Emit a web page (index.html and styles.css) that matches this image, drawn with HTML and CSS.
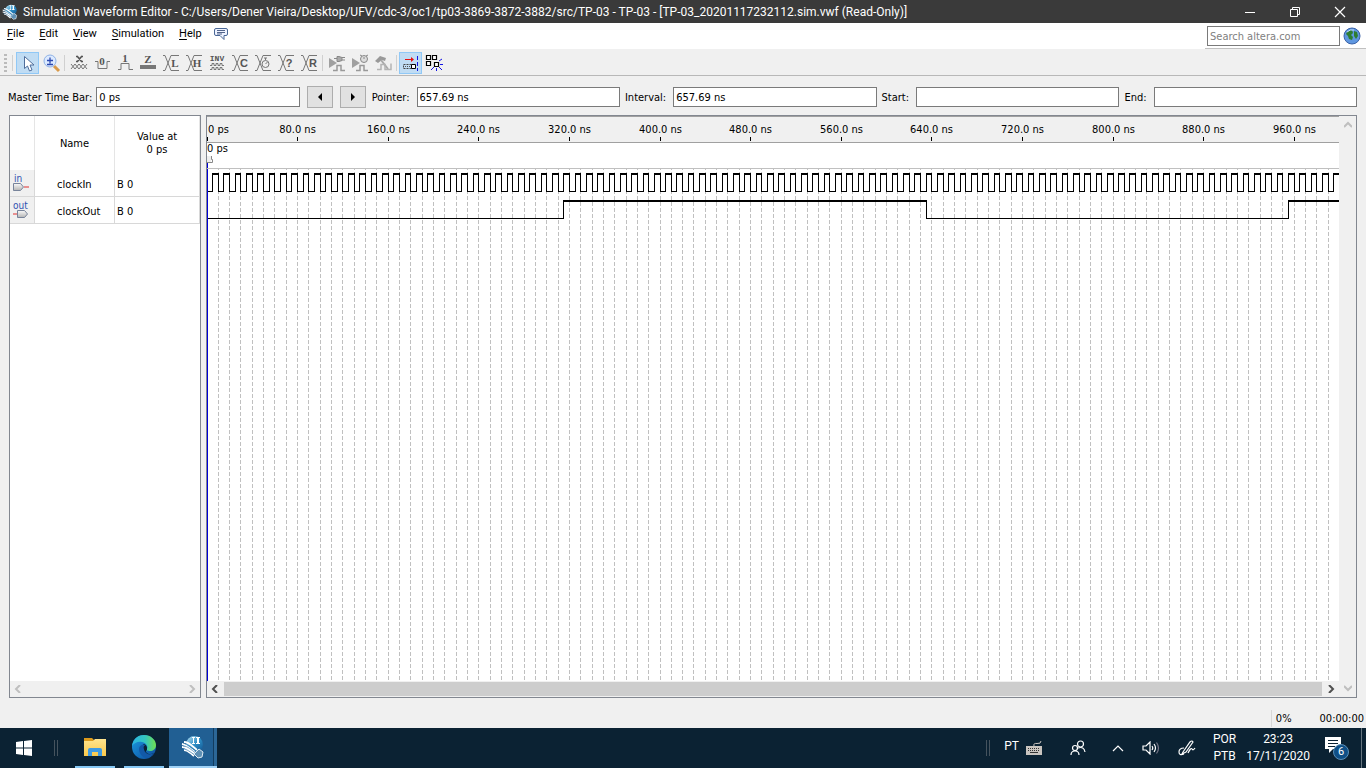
FILE: index.html
```html
<!DOCTYPE html>
<html lang="en">
<head>
<meta charset="utf-8">
<title>Simulation Waveform Editor</title>
<link rel="stylesheet" href="styles.css">
</head>
<body>
<svg class="defs" width="0" height="0" aria-hidden="true">
  <defs>
    <linearGradient id="gBlue" x1="0" y1="0" x2="1" y2="1"><stop offset="0" stop-color="#bfe6f5"/><stop offset=".5" stop-color="#2f8fc6"/><stop offset="1" stop-color="#0c4f8c"/></linearGradient>
    <linearGradient id="gPin" x1="0" y1="0" x2="0" y2="1"><stop offset="0" stop-color="#fafafa"/><stop offset="1" stop-color="#b4b4b4"/></linearGradient>
    <linearGradient id="gEdge" x1="0" y1="0" x2="1" y2="0"><stop offset="0" stop-color="#2bb5e4"/><stop offset=".55" stop-color="#34c6c0"/><stop offset="1" stop-color="#6fe04f"/></linearGradient>
    <linearGradient id="gEdge2" x1="0" y1="0" x2="1" y2="1"><stop offset="0" stop-color="#1b9de2"/><stop offset="1" stop-color="#0d4a9c"/></linearGradient>
    <linearGradient id="gFolder" x1="0" y1="0" x2="0" y2="1"><stop offset="0" stop-color="#ffe58f"/><stop offset="1" stop-color="#fbc94a"/></linearGradient>
    <symbol id="app" viewBox="0 0 24 24">
      <circle cx="13.5" cy="9.5" r="8.5" fill="url(#gBlue)"/>
      <path d="M11 2h3v1h-1v5h1v1h-3V8h1V3h-1zM15 2h4v1h-1v5h1v1h-4V8h1V3h-1z" fill="#fff"/>
      <path d="M1 9c5 1 8 5 13 8M1 12c5 0 8 4 13 7M3 15c4 0 6 3 10 6M3 7c5 0 8 4 13 8" fill="none" stroke="#fff" stroke-width="1.8"/>
      <path d="M2 11c5 0 8 4 13 7M2 14c4 0 7 3 12 6M2 8c5 1 8 5 13 8" fill="none" stroke="#3a7eb0" stroke-width=".7"/>
      <path d="M13 19l5-5 4 3-1 5-4 1z" fill="#5d8fb4" stroke="#dfeaf2" stroke-width="1"/>
    </symbol>
    <symbol id="xcell" viewBox="0 0 18 18"><path d="M1 1.500h2l6 15h8M1 16.500h2l6-15h8" fill="none" stroke="#777"/></symbol>
    <symbol id="play" viewBox="0 0 18 18"><path d="M1 4l8 5-8 5z" fill="#a0a0a0"/><path d="M5 16.500h4v-5h4v5h4" fill="none" stroke="#999" stroke-width="1.500"/></symbol>
  </defs>
</svg>

<header class="titlebar">
  <svg class="app-icon" viewBox="0 0 24 24"><use href="#app"/></svg>
  <h1 class="title">Simulation Waveform Editor - C:/Users/Dener Vieira/Desktop/UFV/cdc-3/oc1/tp03-3869-3872-3882/src/TP-03 - TP-03 - [TP-03_20201117232112.sim.vwf (Read-Only)]</h1>
  <div class="window-buttons">
    <button class="win-btn" aria-label="Minimize"><svg width="12" height="12"><path d="M1 6.500h10" stroke="#fff"/></svg></button>
    <button class="win-btn" aria-label="Restore"><svg width="12" height="12" fill="none" stroke="#fff"><path d="M1.500 3.500h7v7h-7zM3.500 3.500v-2h7v7h-2"/></svg></button>
    <button class="win-btn" aria-label="Close"><svg width="12" height="12"><path d="M1 1l10 10M11 1L1 11" stroke="#fff" stroke-width="1.200"/></svg></button>
  </div>
</header>

<nav class="menubar">
  <button class="menu"><u>F</u>ile</button>
  <button class="menu"><u>E</u>dit</button>
  <button class="menu"><u>V</u>iew</button>
  <button class="menu"><u>S</u>imulation</button>
  <button class="menu"><u>H</u>elp</button>
  <button class="menu feedback" aria-label="Feedback"><svg width="16" height="14"><path d="M3 1.500h10q1.500 0 1.500 1.500v4q0 1.500-1.500 1.500h-2v4l-4-4H3Q1.500 8.500 1.500 7V3Q1.500 1.500 3 1.500z" fill="#eef3ff" stroke="#4a6796"/><path d="M4 3.500h8M4 5.500h8M4 7h5" stroke="#53658c"/></svg></button>
  <form class="search">
    <input class="search-box" type="text" placeholder="Search altera.com" aria-label="Search altera.com">
    <button class="globe" type="button" aria-label="Search"><svg width="18" height="18"><circle cx="9" cy="9" r="8" fill="#5f97e0" stroke="#3b62a8"/><path d="M3 7c1-3 4-4 6-4l1 3-2 2 2 2-1 3-3-1-1-3zM11 4l3 1 1 4-2 3-2-3z" fill="#2e7d32"/><path d="M4 5q3-3 7-2" stroke="#c9e0ff" fill="none"/></svg></button>
  </form>
</nav>

<div class="toolbar" role="toolbar" aria-label="Waveform tools">
  <span class="grip"></span><span class="sep"></span>
  <button class="tool active" aria-label="Selection tool"><svg width="18" height="18"><path d="M5.500 2.500v12l3-2.500 2 5 2.500-1-2-5h4z" fill="#fff" stroke="#4f6d9a"/></svg></button>
  <button class="tool" aria-label="Zoom tool"><svg width="18" height="18"><path d="M12 12l5 5" stroke="#d99a4a" stroke-width="3"/><circle cx="8" cy="7" r="6" fill="#dceaff" stroke="#8fb2e6"/><path d="M5 6.500h6M8 3.500v6M5 10.500h6" stroke="#2c49b0" stroke-width="1.300"/></svg></button>
  <span class="sep"></span>
  <button class="tool" aria-label="Forcing unknown"><svg width="18" height="18"><path d="M6 2.500h2M11 2.500h2M7 2l5 6M12 2L7 8M6 7.500h2M11 7.500h2" stroke="#555" stroke-width="1.600"/><path d="M1 10l4 5 4-5 4 5 4-5M1 15l4-5 4 5 4-5 4 5" fill="none" stroke="#777"/></svg></button>
  <button class="tool" aria-label="Forcing low"><svg width="18" height="18"><path d="M2 7.500h3v7h9v-7h3" fill="none" stroke="#777"/><text class="tl serif" x="9" y="11">0</text></svg></button>
  <button class="tool" aria-label="Forcing high"><svg width="18" height="18"><path d="M2 15.500h3v-6h8v6h4" fill="none" stroke="#777"/><text class="tl serif" x="9" y="8">1</text></svg></button>
  <button class="tool" aria-label="High impedance"><svg width="18" height="18"><path d="M1 11h16v4H1z" fill="#777"/><text class="tl serif" x="9" y="9">Z</text></svg></button>
  <button class="tool" aria-label="Weak low"><svg width="18" height="18"><use href="#xcell"/><text class="tl serif" x="13" y="13">L</text></svg></button>
  <button class="tool" aria-label="Weak high"><svg width="18" height="18"><use href="#xcell"/><text class="tl serif" x="12" y="13">H</text></svg></button>
  <button class="tool" aria-label="Invert"><svg width="18" height="18"><text class="tl small" x="9" y="7">INV</text><path d="M2 11.500h2v-2h2v2h2v-2h2v2h2v-2h2v2h2M2 15.500h2v-2h2v2h2v-2h2v2h2v-2h2v2h2" fill="none" stroke="#777"/></svg></button>
  <button class="tool" aria-label="Count value"><svg width="18" height="18"><use href="#xcell"/><text class="tl" x="13" y="13">C</text></svg></button>
  <button class="tool" aria-label="Overwrite clock"><svg width="18" height="18"><use href="#xcell"/><circle cx="11.500" cy="10" r="3.500" fill="#f0f0f0" stroke="#777"/><path d="M11.500 10l2-2M11.500 4v2M10 4h3" stroke="#777"/></svg></button>
  <button class="tool" aria-label="Arbitrary value"><svg width="18" height="18"><use href="#xcell"/><text class="tl" x="12" y="13">?</text></svg></button>
  <button class="tool" aria-label="Random values"><svg width="18" height="18"><use href="#xcell"/><text class="tl" x="13" y="13">R</text></svg></button>
  <span class="sep"></span>
  <button class="tool" aria-label="Run functional simulation"><svg width="18" height="18"><use href="#play"/><path d="M6 4.500h3M9 2.500h2l3 1v3l-3 1H9zM14 3.500h3M14 6h3" fill="#aaa" stroke="#888"/></svg></button>
  <button class="tool" aria-label="Run timing simulation"><svg width="18" height="18"><use href="#play"/><circle cx="13" cy="5" r="3.500" fill="#ddd" stroke="#888"/><path d="M13 3v2M9 1l2 1M17 1l-2 1" stroke="#888"/></svg></button>
  <button class="tool" aria-label="Generate testbench"><svg width="18" height="18"><path d="M1 7l5-5 6 2-1 3-3-1-4 3z" fill="#999"/><path d="M7 6l7 9" stroke="#aaa" stroke-width="2"/><path d="M3 15.500h4v-5h4v5h6v-6" fill="none" stroke="#b4b4b4" stroke-width="1.500"/></svg></button>
  <span class="sep"></span>
  <button class="tool active" aria-label="Snap to transition"><svg width="18" height="18"><path d="M3 5.500h8" stroke="#e81010"/><path d="M9 3l3 2.500L9 8z" fill="#e81010"/><path d="M1.500 10.500h8v4h-8z" fill="none" stroke="#444" stroke-dasharray="2 1"/><path d="M3 12.500h6" stroke="#555" stroke-dasharray="1 1"/><path d="M9.500 10.500h4v4h-4z" fill="#fff" stroke="#000"/><path d="M15.500 2v15" stroke="#1414e6" stroke-dasharray="4 2"/></svg></button>
  <button class="tool" aria-label="Snap to grid"><svg width="18" height="18"><path d="M1.500 1.500h4v4h-4zM7.500 1.500h4v4h-4zM1.500 7.500h4v4h-4zM9.500 8.500h4v4h-4z" fill="#fff" stroke="#000" stroke-width="1.200"/><path d="M14 7l3-2M15 10.500h3M14 13l3 3M11.500 14v3M9 13l-3 3" stroke="#1414e6"/></svg></button>
</div>

<main class="workspace">
  <form class="timebar">
    <label for="master">Master Time Bar:</label><input class="field" id="master" type="text" value="0 ps">
    <button class="step" type="button" aria-label="Previous transition"><svg width="6" height="8"><path d="M5 0v8L1 4z"/></svg></button>
    <button class="step" type="button" aria-label="Next transition"><svg width="6" height="8"><path d="M1 0v8l4-4z"/></svg></button>
    <label for="pointer">Pointer:</label><input class="field" id="pointer" type="text" value="657.69 ns">
    <label for="interval">Interval:</label><input class="field" id="interval" type="text" value="657.69 ns">
    <label for="start">Start:</label><input class="field" id="start" type="text">
    <label for="end">End:</label><input class="field" id="end" type="text">
  </form>

  <div class="panels">
    <section class="panel signals">
      <table class="signal-table">
        <colgroup><col class="col-icon"><col class="col-name"><col></colgroup>
        <thead><tr><th></th><th>Name</th><th>Value at<br>0 ps</th></tr></thead>
        <tbody>
          <tr><td class="pin"><svg width="20" height="20"><text class="pin-text" x="2" y="8">in</text><path d="M1.500 9.500h7l3 3.500-3 3.500h-7z" fill="url(#gPin)" stroke="#77839a"/><path d="M12 13h5" stroke="#e03030"/></svg></td><td class="name">clockIn</td><td>B 0</td></tr>
          <tr><td class="pin"><svg width="20" height="20"><text class="pin-text" x="1" y="8">out</text><path d="M5.500 9.500h7l3 3.500-3 3.500h-7z" fill="url(#gPin)" stroke="#77839a"/><path d="M1 13h4" stroke="#e03030"/></svg></td><td class="name">clockOut</td><td>B 0</td></tr>
        </tbody>
      </table>
      <div class="hscroll disabled"><svg width="8" height="8"><path d="M6 0L2 4l4 4"/></svg><svg width="8" height="8"><path d="M2 0l4 4-4 4"/></svg></div>
    </section>

    <section class="panel waves">
      <div class="wave-view">
        <svg class="axis" id="axis"></svg>
        <div class="cursor-row"><span>0 ps</span><svg width="6" height="12"><path d="M0 0h4v6H0z" fill="#eee"/><path d="M4.500 0v3.500h1v3H0" fill="none" stroke="#888"/><path class="bar" d="M.5 7v5"/></svg></div>
        <svg class="plot" id="plot"></svg>
      </div>
      <div class="vscroll"><svg width="8" height="8"><path d="M0 6l4-4 4 4"/></svg><svg width="8" height="8"><path d="M0 2l4 4 4-4"/></svg></div>
      <div class="hscroll"><svg width="8" height="8"><path d="M6 0L2 4l4 4"/></svg><span class="thumb"></span><svg width="8" height="8"><path d="M2 0l4 4-4 4"/></svg></div>
    </section>
  </div>
</main>

<footer class="statusbar"><span class="progress">0%</span><span>00:00:00</span></footer>

<div class="taskbar">
  <button class="task start" aria-label="Start"><svg width="16" height="16" fill="#fff"><path d="M0 2l7-1v6.500H0zM8 1l8-1v7.500H8zM0 8.500h7V15l-7-1zM8 8.500h8V16l-8-1z"/></svg></button>
  <span class="task-grip"></span>
  <button class="task running" aria-label="File Explorer"><svg width="22" height="18"><path d="M0 0h8l2 2h11v4H0z" fill="#dc9a1c"/><path d="M0 3h9l2-2h11v17H0z" fill="url(#gFolder)"/><path d="M4 18v-6q0-2 2-2h10q2 0 2 2v6h-4v-4H8v4z" fill="#3f9be3"/></svg></button>
  <button class="task running" aria-label="Microsoft Edge"><svg width="24" height="24"><circle cx="12" cy="12" r="12" fill="url(#gEdge2)"/><path d="M0 11C1 3 7 0 12 0c7 0 12 5 12 10 0 4-3 6-6 6-2 0-4-1-3-2 1-2 0-6-5-7C6 6 2 8 0 11z" fill="url(#gEdge)"/><path d="M12 9c-4 2-5 9 1 12 4 1 7 0 9-3-3 2-7 1-8-1-1-1 1-2 1-3 0-3-1-4-3-5z" fill="#0b2233"/><path d="M7 14c0 4 3 8 7 9 3 0 6-2 8-5-3 2-9 2-10-4 0-2 0-3 1-4-3-1-6 1-6 4z" fill="#1259a8"/><path d="M12 11c-1 2 0 4 2 5l1-2c0-2-1-3-3-3z" fill="#0b2233"/></svg></button>
  <button class="task current" aria-label="Simulation Waveform Editor"><svg width="24" height="24"><use href="#app"/></svg></button>
  <div class="tray">
    <span class="task-grip"></span>
    <span class="lang">PT</span>
    <svg class="kbd" width="16" height="14"><path d="M0 5h16v9H0z" fill="#c9c4bf"/><path d="M2 7.500h12M2 9.500h12" stroke="#333" stroke-dasharray="1 1"/><path d="M4 11.500h8" stroke="#333"/><path d="M8 5q-1-3 3-2.500T15 0" stroke="#c9c4bf" fill="none"/></svg>
    <svg class="people" width="16" height="16" fill="none" stroke="#fff" stroke-width="1.200"><circle cx="10.500" cy="4" r="3"/><circle cx="5" cy="8" r="2.500"/><path d="M1 15q0-4 4-4t4 4M8 8q6-2 7 4"/></svg>
    <svg class="up" width="12" height="8" fill="none" stroke="#fff" stroke-width="1.200"><path d="M1 7l5-5 5 5"/></svg>
    <svg class="vol" width="18" height="14" fill="none" stroke="#fff" stroke-width="1.200"><path d="M1 5h3l4-4v12L4 9H1zM10 5q1.500 2 0 4M12 3q3 4 0 8"/><path d="M14.500 1.500q4 5.500 0 11" stroke="#778"/></svg>
    <svg class="pen" width="18" height="16" fill="none" stroke="#fff" stroke-width="1.200"><path d="M5 12l7-10q2-2 3 0L8 12l-4 2zM6 8q-5 0-5 4t5 2M10 13q3-6 4-4t3-1"/></svg>
    <span class="stack">POR<br>PTB</span>
    <span class="stack clock">23:23<br>17/11/2020</span>
    <button class="notify" aria-label="6 new notifications"><svg width="24" height="26"><path d="M0 2h16v12H8l-4 4v-4H0z" fill="#fff"/><path d="M3 5.500h10M3 8.500h10M3 11.500h7" stroke="#0b2233"/></svg><span class="badge">6</span></button>
    <span class="peek"></span>
  </div>
</div>
<script src="wave.js"></script>
</body>
</html>
```
FILE: styles.css
```css
* { box-sizing: border-box; }
body {
  margin: 0;
  min-height: 100vh;
  display: flex;
  flex-direction: column;
  background: #f0f0f0;
  color: #000;
  font: 11px/13px "DejaVu Sans Condensed", "Noto Sans", sans-serif;
}
button { border: 0; padding: 0; background: none; font: inherit; color: inherit; }
svg { display: block; flex: none; }
.defs { position: absolute; }

.titlebar { display: flex; align-items: center; height: 23px; padding: 0 4px 0 2px; background: #3a3a3a; color: #fff; }
.app-icon { width: 16px; height: 16px; }
.title { flex: 1; margin: 0 0 0 5px; font: 12px/16px Roboto, sans-serif; white-space: nowrap; overflow: hidden; }
.window-buttons { display: flex; }
.win-btn { width: 45px; height: 20px; display: grid; place-items: center; }

.menubar { display: flex; align-items: center; height: 27px; padding-left: 2px; background: #fff; border-bottom: 1px solid #f0f0f0; }
.menu { height: 22px; padding: 0 5px; margin: 0 5px 4px 0; display: flex; align-items: center; font: 11px/14px Roboto, sans-serif; }
.menu u { text-underline-offset: 2px; }
.menu.feedback { padding: 0 1px; }
.search { display: flex; align-items: center; align-self: stretch; gap: 3px; margin-left: auto; padding: 0 5px 0 2px; border-bottom: 1px solid #c0c0c0; }
.search-box { width: 133px; height: 20px; border: 1px solid #7a7a7a; padding: 2px 2px 0; font: inherit; }
.search-box::placeholder { color: #808080; opacity: 1; }

.toolbar { display: flex; align-items: center; height: 26px; padding-left: 4px; border-bottom: 1px solid #b8b8b8; }
.toolbar svg { overflow: visible; }
.grip { width: 3px; height: 18px; background: repeating-linear-gradient(#bbb 0 2px, transparent 2px 4px); }
.sep { width: 1px; height: 16px; margin: 0 2px; background: #d0d0d0; }
.grip + .sep { margin: 0 3px 0 5px; }
.tool { width: 23px; height: 22px; display: grid; place-items: center; }
.tool.active { background: #c0dcf3; border: 1px solid #90c8f6; }
.tl { font: bold 11px "Liberation Sans", sans-serif; fill: #555; text-anchor: middle; }
.tl.serif { font-family: "Liberation Serif", serif; }
.tl.small { font: bold 8px "Liberation Mono", monospace; }

.workspace { flex: 1; display: flex; flex-direction: column; padding: 0 9px; }
.timebar { display: flex; align-items: center; padding: 10px 0 7px; gap: 7px; margin-left: -1px; }
.timebar label { white-space: nowrap; }
.timebar label:first-child { margin-right: -3px; }
.timebar .field + label { margin-left: -2px; }
.timebar .step + label { margin-left: -1px; }
.field { flex: 1; min-width: 0; width: 0; height: 20px; border: 1px solid #7a7a7a; padding: 1px 2px 0; background: #fff; font: inherit; }
.step { width: 26px; height: 22px; background: #e1e1e1; border: 1px solid #adadad; display: grid; place-items: center; }

.panels { flex: 1; display: flex; gap: 5px; }
.panel { background: #fff; border: 1px solid #828790; }
.signals { width: 192px; display: flex; flex-direction: column; justify-content: space-between; }
.signal-table { width: 100%; table-layout: fixed; border-collapse: separate; border-spacing: 0; }
.col-icon { width: 25px; }
.col-name { width: 80px; }
.signal-table th { height: 54px; padding: 0; font-weight: normal; border-right: 1px solid #e5e5e5; }
.signal-table td { height: 27px; padding: 2px 2px 0; border-right: 1px solid #d8d8d8; border-bottom: 1px solid #d8d8d8; }
.signal-table .pin { background: #f0f0f0; }
.signal-table .pin svg { overflow: visible; }
.signal-table .name { padding-left: 22px; }
.pin-text { font: 10px "DejaVu Sans Condensed", sans-serif; fill: #3050b0; }

.hscroll { display: flex; align-items: center; height: 16px; background: #f0f0f0; padding: 0 4px; gap: 5px; }
.hscroll svg, .vscroll svg { fill: none; stroke: #505050; stroke-width: 2; }
.disabled { justify-content: space-between; }
.disabled svg, .vscroll svg { stroke: #bfbfbf; }
.thumb { flex: 1; height: 14px; background: #cdcdcd; }
.waves { flex: 1; min-width: 0; display: grid; grid-template-columns: minmax(0, 1fr) 17px; grid-template-rows: 1fr 16px; }
.wave-view { display: flex; flex-direction: column; overflow: hidden; }
.vscroll { grid-row: 1 / 3; grid-column: 2; background: #f0f0f0; display: flex; flex-direction: column; justify-content: space-between; align-items: center; padding: 5px 0; }
.axis { width: 100%; height: 27px; background: #f0f0f0; border-top: 1px solid #a0a0a0; border-bottom: 1px solid #a0a0a0; }
.axis text { text-anchor: middle; }
.axis .first { text-anchor: start; }
.cursor-row { height: 25px; display: flex; flex-direction: column; justify-content: space-between; line-height: 12px; }
.plot { width: 100%; flex: 1; height: 0; min-height: 0; border-top: 1px solid #c0c0c0; shape-rendering: crispEdges; fill: none; stroke: #000; }
.grid { stroke: #c0c0c0; stroke-dasharray: 4 2; stroke-dashoffset: 3; }
.high { stroke-width: 2; }
.bar { stroke: #0000d8; }

.statusbar { display: flex; justify-content: flex-end; align-items: center; gap: 28px; height: 30px; padding: 10px 2px 0 0; }
.progress { border-left: 1px solid #d7d7d7; padding-left: 4px; height: 17px; line-height: 17px; }

.taskbar { display: flex; height: 40px; background: #0b2233; color: #fff; font: 12px/17px Roboto, sans-serif; }
.task { width: 48px; display: grid; place-items: center; }
.task-grip { align-self: center; width: 4px; height: 16px; border: solid #45535e; border-width: 0 1px; }
.start + .task-grip { margin: 0 17px 0 6px; }
.running { width: 40px; margin-right: 9px; border-bottom: 2px solid #86c8f5; }
.current { margin-left: -4px; background: linear-gradient(90deg, #215f93 44px, #123c5f 44px 45px, #2c6797 45px); border-bottom: 2px solid #9fd2f7; }
.tray { margin-left: auto; display: flex; align-items: center; }
.lang { margin: 0 7px 4px 14px; }
.kbd { margin-right: 28px; }
.people { margin-right: 26px; }
.up { margin-right: 18px; }
.vol { margin-right: 18px; }
.pen { margin-right: 17px; }
.stack { text-align: center; }
.clock { margin: 0 15px 0 10px; }
.notify { position: relative; width: 24px; height: 26px; margin-right: 12px; }
.badge { position: absolute; left: 8px; top: 9px; width: 16px; height: 16px; border-radius: 50%; background: #0f4f86; border: 1px solid #5a8fb8; font: 11px/14px Roboto, sans-serif; text-align: center; }
.peek { width: 5px; height: 40px; border-left: 1px solid #66757f; }
```
FILE: wave.js
```js
const SCALE = 1.1325;
const LABEL_HALF = 25;
const NS = "http://www.w3.org/2000/svg";
const axis = document.getElementById("axis");
const plot = document.getElementById("plot");
const px = ns => Math.floor(ns * SCALE) + 0.5;

function add(parent, tag, attrs, text) {
  const el = document.createElementNS(NS, tag);
  for (const key in attrs) el.setAttribute(key, attrs[key]);
  if (text) el.textContent = text;
  parent.appendChild(el);
}

function trace(edges, end, low, high) {
  let thin = "", thick = "", level = 0, from = px(0);
  for (const t of edges.filter(t => t < end).concat(end)) {
    const x = px(t);
    if (level) thick += `M${from - 0.5} ${high}H${x + 0.5}`;
    else thin += `M${from} ${low}H${x}`;
    if (t < end) thin += `M${x} ${high}V${low + 0.5}`;
    from = x;
    level = 1 - level;
  }
  add(plot, "path", { d: thin });
  add(plot, "path", { d: thick, class: "high" });
}

function draw() {
  axis.replaceChildren();
  plot.replaceChildren();
  const width = axis.clientWidth;
  const end = width / SCALE + 1;

  for (let t = 0; px(t) + LABEL_HALF < width; t += 80) {
    add(axis, "path", { d: `M${px(t)} 20v4`, stroke: "#000" });
    add(axis, "text", t ? { x: px(t), y: 16 } : { x: 1, y: 16, class: "first" }, t ? t.toFixed(1) + " ns" : "0 ps");
  }

  let grid = "";
  for (let t = 10; t <= end; t += 10) grid += `M${px(t)} 0v3000`;
  add(plot, "path", { d: grid, class: "grid" });

  const clock = [];
  for (let t = 5; t <= end; t += 5) clock.push(t);
  trace(clock, end, 22.5, 5);
  trace([315, 635, 955, 1275], end, 49.5, 32);
  add(plot, "path", { d: "M0.5 0v3000", class: "bar" });
}

draw();
window.addEventListener("resize", draw);
```
